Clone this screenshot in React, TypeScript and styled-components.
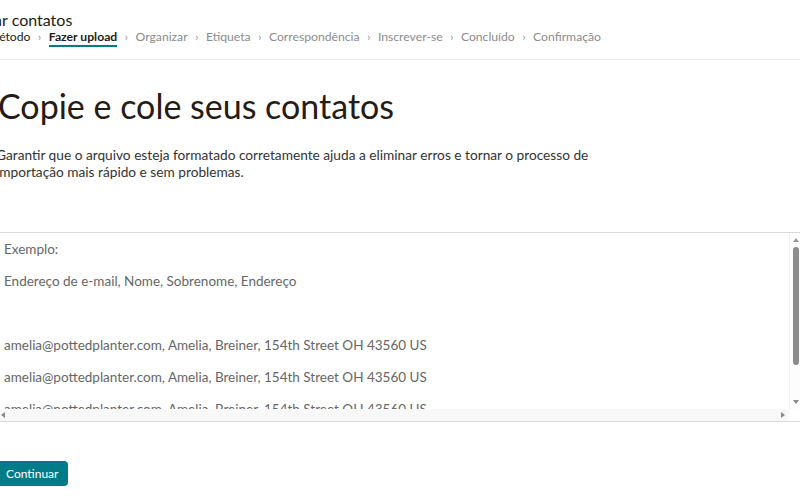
import React from "react";
import styled, { createGlobalStyle, css } from "styled-components";

const FONT = `"Lato", "Liberation Sans", sans-serif`;

const Global = createGlobalStyle`
  html, body { margin: 0; padding: 0; background: #ffffff; overflow: hidden; }
  body { font-family: ${FONT}; color: #241c15; }
  * { box-sizing: border-box; }
`;

const Page = styled.div`
  width: 800px;
  height: 500px;
  overflow: hidden;
`;

const Header = styled.header`
  padding: 10px 0 12px;
  border-bottom: 1px solid #e8e8e8;
`;

const HeaderInner = styled.div`
  margin-left: -12px;
`;

const Title = styled.h1`
  margin: 0 0 0 -41px;
  font-size: 16px;
  line-height: 20px;
  font-weight: 400;
  color: #241c15;
`;

const Steps = styled.nav`
  display: flex;
  align-items: center;
  margin-top: -2px;
  font-size: 12.2px;
  line-height: 17px;
  white-space: nowrap;
`;

const Step = styled.span<{ $state: "done" | "active" | "todo" }>`
  color: ${(p) => (p.$state === "todo" ? "#8c8c8c" : "#241c15")};
  font-weight: ${(p) => (p.$state === "active" ? 700 : 400)};
  border-bottom: 2px solid ${(p) => (p.$state === "active" ? "#007c89" : "transparent")};
`;

const Sep = styled.span`
  color: #8c8c8c;
  margin: 0 7.6px;
  font-size: 11px;
  padding-bottom: 2px;
`;

const Main = styled.main`
  margin-left: -4px;
`;

const Heading = styled.h2`
  margin: 24px 0 0 2px;
  font-size: 34px;
  line-height: 44px;
  font-weight: 400;
  color: #241c15;
`;

const Lead = styled.p`
  margin: 18px 0 0;
  font-size: 13.7px;
  line-height: 17px;
  color: #333333;
  width: 640px;
`;

const PasteBox = styled.div`
  position: relative;
  margin-top: 52px;
  width: 808px;
  height: 190px;
  border: 1px solid #d9d9d9;
  background: #ffffff;
`;

const Paste = styled.textarea`
  display: block;
  width: 100%;
  height: 100%;
  padding: 8px 7px;
  border: none;
  resize: none;
  outline: none;
  overflow: hidden;
  white-space: pre;
  font-family: ${FONT};
  font-size: 13.5px;
  line-height: 16px;
  color: #666666;
  background: transparent;
`;

const VBar = styled.div`
  position: absolute;
  top: 0;
  right: 0;
  bottom: 12px;
  width: 14px;
  padding-right: 2px;
  background: #fdfdfd;
  border-left: 1px solid #f1f1f1;
  display: flex;
  flex-direction: column;
  align-items: center;
`;

const HBar = styled.div`
  position: absolute;
  left: 0;
  right: 14px;
  bottom: 0;
  height: 12px;
  background: #f8f8f8;
  display: flex;
  align-items: center;
  justify-content: space-between;
`;

const ArrowCell = styled.div<{ $w: number; $h: number }>`
  width: ${(p) => p.$w}px;
  height: ${(p) => p.$h}px;
  flex: none;
  display: flex;
  align-items: center;
  justify-content: center;
`;

const Arrow = styled.span<{ $dir: "up" | "down" | "left" | "right" }>`
  width: 0;
  height: 0;
  border-style: solid;
  ${(p) =>
    p.$dir === "up"
      ? css`border-width: 0 3px 4px 3px; border-color: transparent transparent #9a9a9a transparent;`
      : p.$dir === "down"
      ? css`border-width: 4px 3px 0 3px; border-color: #8a8a8a transparent transparent transparent;`
      : p.$dir === "left"
      ? css`border-width: 3px 4px 3px 0; border-color: transparent #8a8a8a transparent transparent;`
      : css`border-width: 3px 0 3px 4px; border-color: transparent transparent transparent #8a8a8a;`}
`;

const Thumb = styled.div`
  width: 6px;
  height: 118px;
  border-radius: 3px;
  background: #8c8c8c;
`;

const Track = styled.div`
  flex: 1;
  width: 100%;
  display: flex;
  justify-content: center;
`;

const PrimaryButton = styled.button`
  display: block;
  margin-top: 39px;
  margin-left: -4px;
  height: 25px;
  padding: 0 10px 0 14px;
  border: none;
  border-radius: 4px;
  background: #007c89;
  color: #ffffff;
  font-family: ${FONT};
  font-size: 12px;
  cursor: pointer;
`;

const steps: { label: string; state: "done" | "active" | "todo" }[] = [
  { label: "Método", state: "done" },
  { label: "Fazer upload", state: "active" },
  { label: "Organizar", state: "todo" },
  { label: "Etiqueta", state: "todo" },
  { label: "Correspondência", state: "todo" },
  { label: "Inscrever-se", state: "todo" },
  { label: "Concluído", state: "todo" },
  { label: "Confirmação", state: "todo" },
];

const row = "amelia@pottedplanter.com, Amelia, Breiner, 154th Street OH 43560 US";
const example = [
  "Exemplo:",
  "",
  "Endereço de e-mail, Nome, Sobrenome, Endereço",
  "",
  "",
  "",
  row,
  "",
  row,
  "",
  row,
  "",
  row,
].join("\n");

export default function App() {
  return (
    <Page>
      <Global />
      <Header>
        <HeaderInner>
          <Title>Importar contatos</Title>
          <Steps>
            {steps.map((s, i) => (
              <React.Fragment key={s.label}>
                {i > 0 && <Sep>›</Sep>}
                <Step $state={s.state}>{s.label}</Step>
              </React.Fragment>
            ))}
          </Steps>
        </HeaderInner>
      </Header>
      <Main>
        <Heading>Copie e cole seus contatos</Heading>
        <Lead>
          Garantir que o arquivo esteja formatado corretamente ajuda a eliminar erros e tornar o processo de
          importação mais rápido e sem problemas.
        </Lead>
        <PasteBox>
          <Paste defaultValue={example} spellCheck={false} />
          <VBar>
            <ArrowCell $w={12} $h={14}>
              <Arrow $dir="up" />
            </ArrowCell>
            <Track>
              <Thumb />
            </Track>
            <ArrowCell $w={12} $h={14}>
              <Arrow $dir="down" />
            </ArrowCell>
          </VBar>
          <HBar>
            <ArrowCell $w={12} $h={12}>
              <Arrow $dir="left" />
            </ArrowCell>
            <ArrowCell $w={12} $h={12}>
              <Arrow $dir="right" />
            </ArrowCell>
          </HBar>
        </PasteBox>
        <PrimaryButton>Continuar</PrimaryButton>
      </Main>
    </Page>
  );
}
